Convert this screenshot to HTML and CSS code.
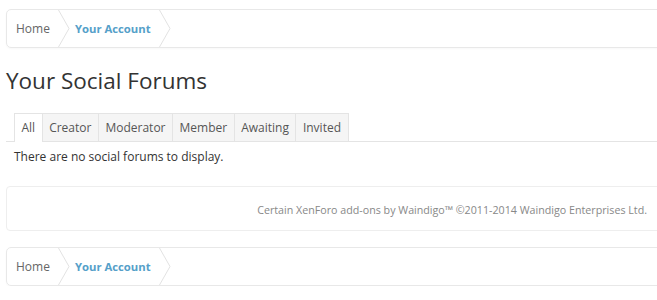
FILE: index.html
```html
<!DOCTYPE html>
<html lang="en">

<head>
    <meta charset="UTF-8">
    <title>Your Social Forums</title>
    <link rel="stylesheet" href="styles.css">
</head>

<body>
    <div class="page">
        <nav class="breadcrumb">
            <a class="crumb" href="#">Home
                <svg class="arrow" viewBox="0 0 12 38" preserveAspectRatio="none"><polyline points="0.5,0 11,19 0.5,38" /></svg>
            </a>
            <a class="crumb current" href="#">Your Account
                <svg class="arrow" viewBox="0 0 12 38" preserveAspectRatio="none"><polyline points="0.5,0 11,19 0.5,38" /></svg>
            </a>
        </nav>

        <h1 class="title">Your Social Forums</h1>

        <ul class="tabs">
            <li class="tab active">All</li>
            <li class="tab">Creator</li>
            <li class="tab">Moderator</li>
            <li class="tab">Member</li>
            <li class="tab">Awaiting</li>
            <li class="tab">Invited</li>
        </ul>

        <p class="empty">There are no social forums to display.</p>

        <div class="copyright">
            Certain XenForo add-ons by Waindigo&trade; &copy;2011-2014 Waindigo Enterprises Ltd.
        </div>

        <nav class="breadcrumb">
            <a class="crumb" href="#">Home
                <svg class="arrow" viewBox="0 0 12 38" preserveAspectRatio="none"><polyline points="0.5,0 11,19 0.5,38" /></svg>
            </a>
            <a class="crumb current" href="#">Your Account
                <svg class="arrow" viewBox="0 0 12 38" preserveAspectRatio="none"><polyline points="0.5,0 11,19 0.5,38" /></svg>
            </a>
        </nav>
    </div>
</body>

</html>
```

FILE: styles.css
```css
body {
    margin: 0;
    overflow: hidden;
    font-family: "Open Sans", Arial, sans-serif;
    color: #333;
    background: #fff;
}

.page {
    padding: 9px 0 0 6px;
}

.breadcrumb {
    display: flex;
    height: 37px;
    margin-right: -20px;
    border: 1px solid #e8e8e8;
    border-radius: 5px;
    box-shadow: 0 1px 2px rgba(0, 0, 0, 0.03);
}

.crumb {
    display: flex;
    align-items: center;
    gap: 8px;
    padding-left: 9px;
    font-size: 12px;
    color: #666;
    text-decoration: none;
}

.crumb.current {
    padding-left: 5px;
    font-size: 11.3px;
    font-weight: bold;
    color: #55a0c9;
}

.arrow {
    width: 12px;
    height: 37px;
    fill: none;
    stroke: #e2e2e2;
    stroke-width: 1;
}

.title {
    margin: 17px 0 0;
    font-size: 22.5px;
    font-weight: normal;
    line-height: 32px;
    color: #333;
}

.tabs {
    display: flex;
    margin: 16px -20px 0 0;
    padding: 0 0 0 8px;
    list-style: none;
    border-bottom: 1px solid #e4e4e4;
}

.tab {
    padding: 0 6.5px;
    height: 27px;
    line-height: 27px;
    font-size: 12px;
    color: #555;
    background: #f5f5f5;
    border: 1px solid #e4e4e4;
    border-bottom: none;
    border-left: none;
    margin-bottom: -1px;
}

.tab:first-child {
    border-left: 1px solid #e4e4e4;
}

.tab.active {
    background: #fff;
    height: 28px;
}

.empty {
    margin: 6px 0 0 8px;
    font-size: 12px;
    color: #333;
}

.copyright {
    margin: 21px -20px 16px 0;
    height: 43px;
    padding: 0 29px 0 0;
    border: 1px solid #eeeeee;
    border-radius: 4px;
    font-size: 10.7px;
    color: #888;
    text-align: right;
    line-height: 47px;
}
```
